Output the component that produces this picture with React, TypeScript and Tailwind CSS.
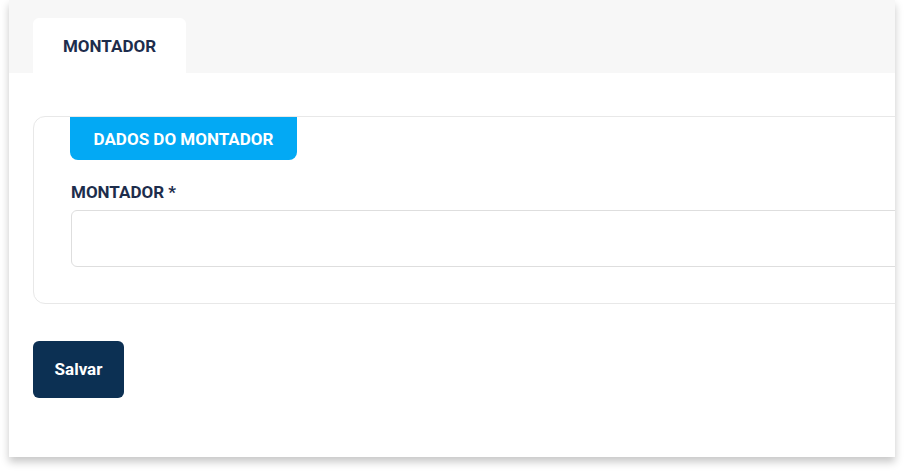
export default function App() {
  return (
    <div className="h-[474px] w-[904px] overflow-hidden bg-white font-['Roboto',sans-serif]">
      <div className="ml-[9px] h-[457px] w-[886px] overflow-hidden bg-white shadow-[0_5px_8px_rgba(0,0,0,0.22)]">
        <div className="flex h-[73px] items-end bg-[#f7f7f7] pl-[24px]">
          <div className="flex h-[55px] w-[153px] items-center justify-center rounded-t-[6px] bg-white pt-[3px] text-[17px] font-bold text-[#1d2d4c]">
            MONTADOR
          </div>
        </div>

        <div className="pl-[24px] pt-[43px]">
          <div className="h-[188px] w-[900px] rounded-[12px] border border-[#e8e8e8] pl-[37px]">
            <div className="-ml-px flex h-[43px] w-[227px] items-center justify-center rounded-b-[8px] bg-[#03a9f4] pt-[2px] text-[17px] font-bold text-white">
              DADOS DO MONTADOR
            </div>
            <label className="mt-[22px] block text-[17px] font-bold leading-[20px] text-[#1d2d4c]">
              MONTADOR *
            </label>
            <input
              type="text"
              className="mt-[8px] block h-[57px] w-[860px] rounded-[6px] border border-[#dedede] bg-white px-3 outline-none"
            />
          </div>

          <button className="mt-[37px] h-[57px] w-[91px] rounded-[6px] bg-[#0c3053] pt-px text-[17px] font-bold text-white">
            Salvar
          </button>
        </div>
      </div>
    </div>
  );
}
